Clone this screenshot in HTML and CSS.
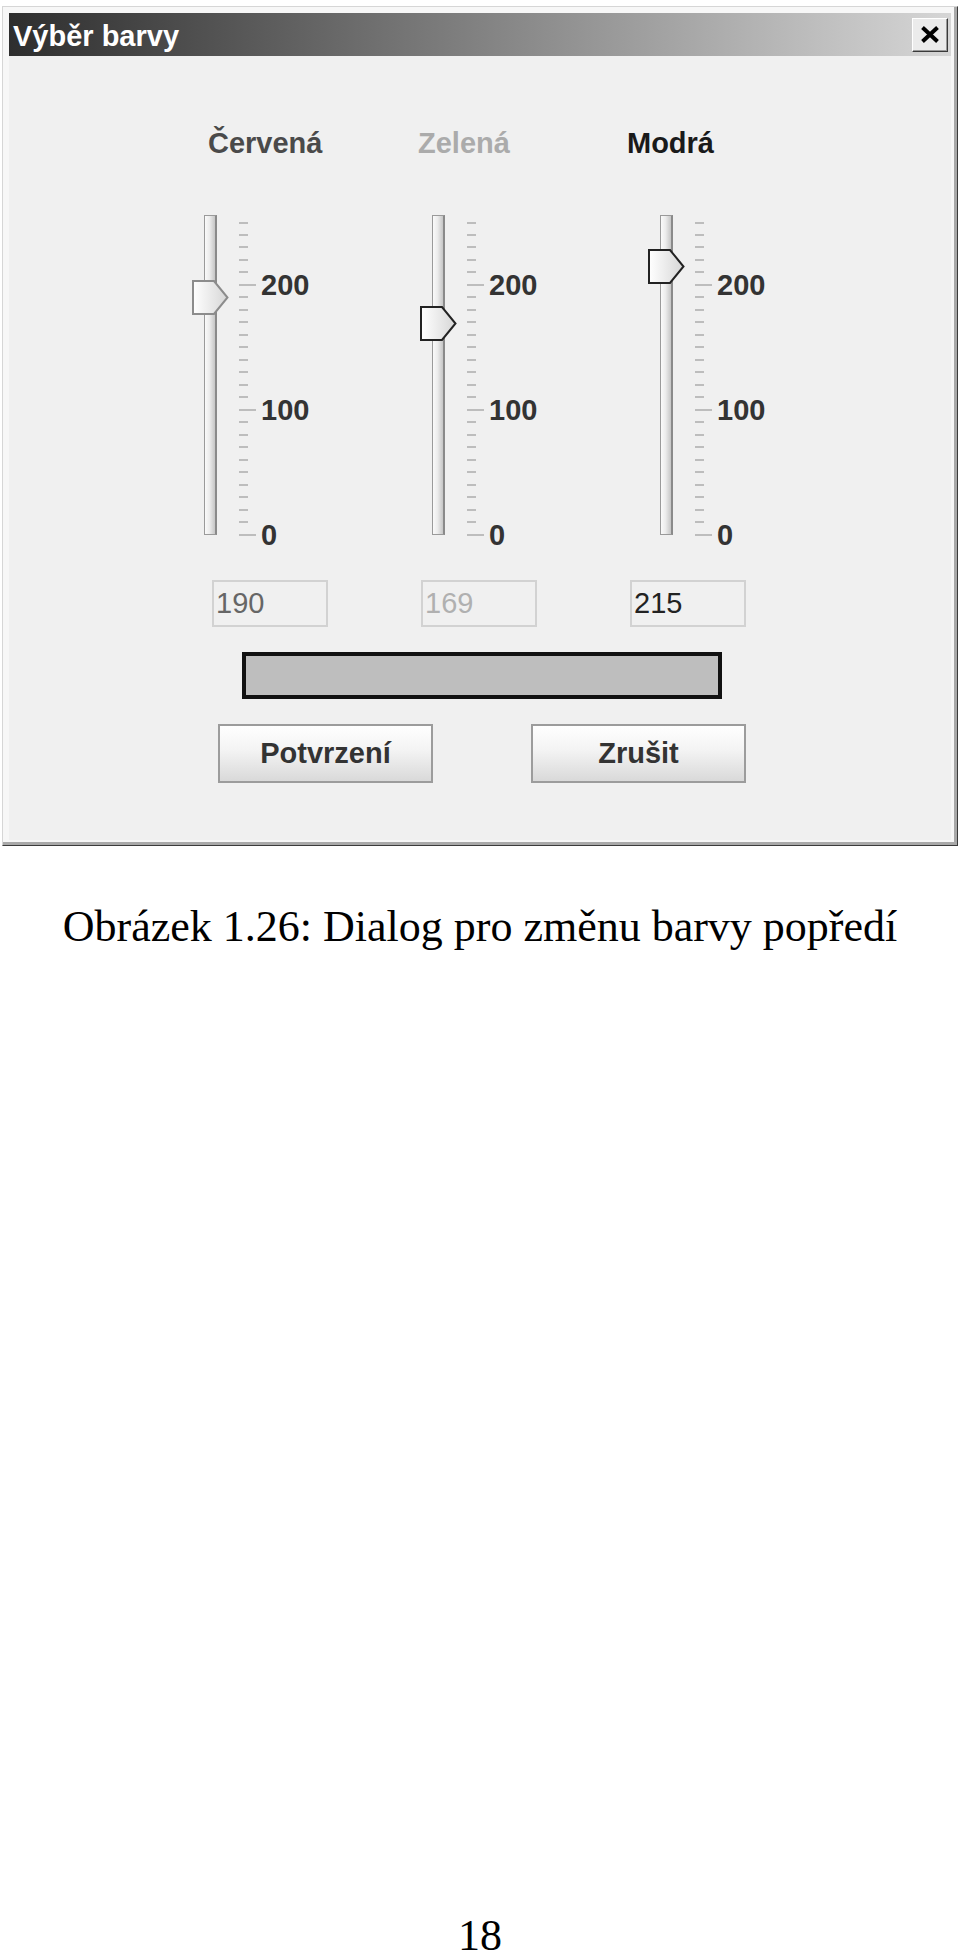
FILE: index.html
```html
<!DOCTYPE html>
<html lang="cs">
<head>
  <meta charset="UTF-8">
  <title>Výběr barvy</title>
  <link rel="stylesheet" href="styles.css">
</head>
<body>
  <!-- shared shapes for the sliders -->
  <svg class="defs" width="0" height="0">
    <defs>
      <linearGradient id="thumbFill" x1="0" y1="0" x2="1" y2="0">
        <stop offset="0" stop-color="#ffffff"/>
        <stop offset="1" stop-color="#d6d6d6"/>
      </linearGradient>
      <g id="ticks" stroke="#bdbdbd" stroke-width="2">
        <path d="M0 8h9M0 20h9M0 32h9M0 45h9M0 57h9M0 82h9M0 95h9M0 107h9M0 120h9M0 132h9M0 145h9M0 157h9M0 170h9M0 182h9M0 207h9M0 220h9M0 232h9M0 245h9M0 257h9M0 270h9M0 282h9M0 295h9M0 307h9"/>
        <path d="M0 70h17M0 195h17M0 320h17"/>
      </g>
    </defs>
  </svg>

  <div class="window">
    <div class="titlebar">
      <span class="title">Výběr barvy</span>
      <span class="close">
        <svg width="20" height="19" viewBox="0 0 20 19"><path d="M2.5 2.5L17.5 16.5M17.5 2.5L2.5 16.5" stroke="#000" stroke-width="4"/></svg>
      </span>
    </div>

    <div class="content">
      <div class="labels">
        <span class="red">Červená</span>
        <span class="green">Zelená</span>
        <span class="blue">Modrá</span>
      </div>

      <div class="sliders">
        <div class="slider">
          <div class="rail">
            <div class="track"></div>
            <svg class="thumb dim" width="37" height="35" style="top: 65px"><path d="M1 1H22L35.5 17.5L22 34H1Z"/></svg>
          </div>
          <svg class="ticks" width="17" height="322"><use href="#ticks"/></svg>
          <div class="nums"><span>200</span><span>100</span><span>0</span></div>
        </div>
        <div class="slider">
          <div class="rail">
            <div class="track"></div>
            <svg class="thumb" width="37" height="35" style="top: 91px"><path d="M1 1H22L35.5 17.5L22 34H1Z"/></svg>
          </div>
          <svg class="ticks" width="17" height="322"><use href="#ticks"/></svg>
          <div class="nums"><span>200</span><span>100</span><span>0</span></div>
        </div>
        <div class="slider">
          <div class="rail">
            <div class="track"></div>
            <svg class="thumb" width="37" height="35" style="top: 34px"><path d="M1 1H22L35.5 17.5L22 34H1Z"/></svg>
          </div>
          <svg class="ticks" width="17" height="322"><use href="#ticks"/></svg>
          <div class="nums"><span>200</span><span>100</span><span>0</span></div>
        </div>
      </div>

      <div class="fields">
        <div class="field red-val">190</div>
        <div class="field green-val">169</div>
        <div class="field blue-val">215</div>
      </div>

      <div class="preview"></div>

      <div class="buttons">
        <button class="btn">Potvrzení</button>
        <button class="btn">Zrušit</button>
      </div>
    </div>
  </div>

  <p class="caption">Obrázek 1.26: Dialog pro změnu barvy popředí</p>

  <div class="page-num">18</div>
</body>
</html>
```

FILE: styles.css
```css
body {
  margin: 0;
  height: 1958px;
  display: flex;
  flex-direction: column;
  background-color: #fff;
  font-family: "Liberation Serif", "Times New Roman", serif;
}
.defs {
  position: absolute;
}

/* dialog frame */
.window {
  box-sizing: border-box;
  width: 956px;
  height: 840px;
  margin: 6px 0 0 2px;
  padding: 6px 6px 5px 6px;
  border: 1px solid;
  border-color: #d6d6d6 #3c3c3c #3c3c3c #d6d6d6;
  background-color: #f7f7f7;
  box-shadow: inset -3px -3px 0 #a9a9a9;
  display: flex;
  flex-direction: column;
}
.titlebar {
  height: 43px;
  flex: 0 0 43px;
  box-sizing: border-box;
  padding: 0 3px 0 4px;
  display: flex;
  align-items: center;
  justify-content: space-between;
  background: linear-gradient(to right, #2e2e2e, #d6d6d6);
}
.title {
  margin-top: 4px;
  color: #fff;
  font: bold 29px "Liberation Sans", Arial, sans-serif;
}
.close {
  box-sizing: border-box;
  width: 36px;
  height: 34px;
  display: flex;
  align-items: center;
  justify-content: center;
  background-color: #ebebeb;
  border: 1px solid;
  border-color: #fff #3a3a3a #3a3a3a #fff;
  box-shadow: inset -1px -1px 0 #999;
}

.content {
  flex: 1;
  display: flex;
  flex-direction: column;
  background-color: #f0f0f0;
  font-family: "Liberation Sans", Arial, sans-serif;
}

/* channel names */
.labels {
  display: grid;
  grid-template-columns: 210px 209px auto;
  padding-left: 199px;
  margin-top: 70px;
  font-size: 29px;
  font-weight: bold;
  line-height: 34px;
}
.red { color: #4a4a4a; }
.green { color: #ababab; }
.blue { color: #1a1a1a; }

/* vertical sliders */
.sliders {
  display: flex;
  padding-left: 183px;
  margin-top: 55px;
}
.slider {
  flex: 0 0 228px;
  display: flex;
  align-items: flex-start;
}
.rail {
  position: relative;
  width: 37px;
  height: 320px;
}
.track {
  box-sizing: border-box;
  width: 13px;
  height: 320px;
  margin-left: 12px;
  border: 1px solid #9a9a9a;
  border-right: 2px solid #8a8a8a;
  background: linear-gradient(to right, #fafafa, #ececec 45%, #c6c6c6);
}
.thumb {
  position: absolute;
  left: 0;
}
.thumb path {
  fill: url(#thumbFill);
  stroke: #222;
  stroke-width: 2;
}
.thumb.dim path {
  stroke: #8c8c8c;
}
.ticks {
  margin-left: 10px;
}
.nums {
  display: flex;
  flex-direction: column;
  gap: 95px;
  padding-top: 55px;
  margin-left: 5px;
  font-size: 29px;
  font-weight: bold;
  line-height: 30px;
  color: #333;
}

/* value boxes */
.fields {
  display: flex;
  gap: 93px;
  padding-left: 203px;
  margin-top: 30px;
}
.field {
  box-sizing: border-box;
  width: 116px;
  height: 47px;
  padding-left: 2px;
  border: 2px solid #d2d2d2;
  font-size: 29px;
  line-height: 43px;
}
.red-val { color: #666; }
.green-val { color: #b0b0b0; }
.blue-val { color: #222; }

.preview {
  box-sizing: border-box;
  width: 480px;
  height: 47px;
  margin: 25px 0 0 233px;
  border: 4px solid #111;
  background-color: #bebebe;
}

.buttons {
  display: flex;
  gap: 98px;
  padding-left: 209px;
  margin-top: 25px;
}
.btn {
  box-sizing: border-box;
  width: 215px;
  height: 59px;
  padding: 0;
  border: 2px solid #9c9c9c;
  background: linear-gradient(#fff, #f3f3f3 45%, #d9d9d9);
  color: #333;
  font: bold 29px "Liberation Sans", Arial, sans-serif;
}

/* figure caption and page footer */
.caption {
  margin: 55px 0 0;
  text-align: center;
  font-size: 44px;
  line-height: 52px;
  color: #000;
}
.page-num {
  margin-top: auto;
  text-align: center;
  font-size: 44px;
  line-height: 44px;
  color: #000;
}
```
